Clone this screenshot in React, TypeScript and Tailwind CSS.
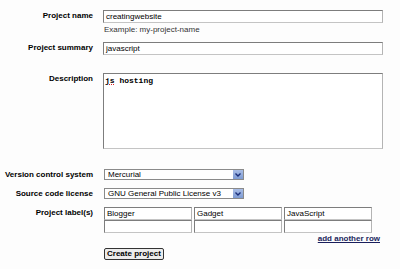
import React from "react";

const inputBox =
  "h-[13px] border border-t-[#7d7d7d] border-l-[#7d7d7d] border-r-[#b4b4b4] border-b-[#c4c4c4] bg-white px-[2px] text-[8px] leading-[11px] text-black";

function Label({ children }: { children: React.ReactNode }) {
  return (
    <div className="w-[93px] shrink-0 text-right text-[8px] font-bold leading-[11px] text-black">
      {children}
    </div>
  );
}

function Select({ value, width }: { value: string; width: string }) {
  return (
    <div
      className={`flex h-[11px] items-stretch border border-[#8a8a8a] bg-white ${width}`}
    >
      <span className="flex-1 pl-[3px] text-[8px] leading-[9px] text-black">
        {value}
      </span>
      <span className="flex w-[10px] items-center justify-center bg-gradient-to-b from-[#a9bde6] to-[#7e9bd3]">
        <svg width="6" height="4" viewBox="0 0 6 4">
          <path d="M0.5 0.5 L3 3 L5.5 0.5" fill="none" stroke="#1b2f7a" strokeWidth="1.4" />
        </svg>
      </span>
    </div>
  );
}

export default function App() {
  const labels = ["Blogger", "Gadget", "JavaScript"];

  return (
    <div className="h-[269px] w-[400px] bg-[#fdfdfd] pt-[10px] font-['Liberation_Sans',Arial,sans-serif]">
      <div className="flex gap-[10px]">
        <Label>
          <div className="pt-[0px]">Project name</div>
        </Label>
        <div>
          <div className={`${inputBox} w-[280px]`}>creatingwebsite</div>
          <div className="mt-[2px] pl-[1px] text-[8px] leading-[10px] text-[#333]">
            Example: my-project-name
          </div>
        </div>
      </div>

      <div className="mt-[7px] flex gap-[10px]">
        <Label>Project summary</Label>
        <div className={`${inputBox} w-[280px]`}>javascript</div>
      </div>

      <div className="mt-[18px] flex gap-[10px]">
        <Label>Description</Label>
        <div className="h-[76px] w-[280px] border border-t-[#7d7d7d] border-l-[#7d7d7d] border-r-[#b4b4b4] border-b-[#c4c4c4] bg-white px-[1px] pt-[2px] font-['Liberation_Mono',monospace] text-[8px] font-bold leading-[10px] text-black">
          <span className="underline decoration-[#d22] decoration-dotted decoration-[1px]">js</span> hosting
        </div>
      </div>

      <div className="mt-[20px] flex gap-[11px]">
        <Label>Version control system</Label>
        <Select value="Mercurial" width="w-[140px]" />
      </div>

      <div className="mt-[8px] flex gap-[11px]">
        <Label>Source code license</Label>
        <Select value="GNU General Public License v3" width="w-[140px]" />
      </div>

      <div className="mt-[8px] flex gap-[11px]">
        <Label>Project label(s)</Label>
        <div>
          <div className="grid grid-cols-[88px_88px_88px] gap-x-[2px]">
            {labels.map((l) => (
              <div key={l} className={`${inputBox} w-[88px]`}>
                {l}
              </div>
            ))}
            {labels.map((l) => (
              <div key={l + "2"} className={`${inputBox} w-[88px]`} />
            ))}
          </div>
          <div className="mt-[1px] flex justify-end">
            <a className="mr-[-8px] text-[8px] font-bold leading-[10px] text-[#1a1f5c] underline">
              add another row
            </a>
          </div>
        </div>
      </div>

      <div className="mt-[4px] flex gap-[11px]">
        <div className="w-[93px] shrink-0" />
        <button className="h-[12px] rounded-[2px] border border-[#333] bg-[#ececec] px-[2px] text-[8px] font-bold leading-[10px] text-black">
          Create project
        </button>
      </div>
    </div>
  );
}
